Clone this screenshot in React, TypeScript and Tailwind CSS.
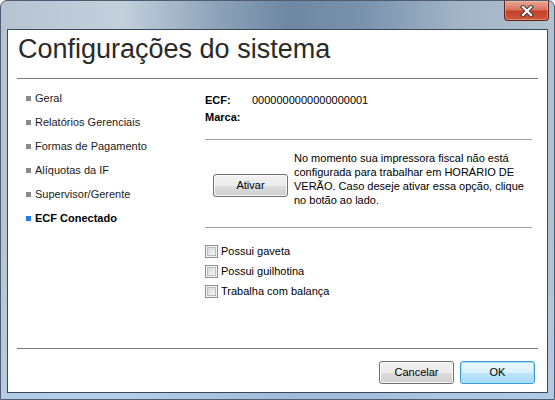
import React from 'react';

const navItems = [
  'Geral',
  'Relatórios Gerenciais',
  'Formas de Pagamento',
  'Alíquotas da IF',
  'Supervisor/Gerente',
];

function CheckRow({ label }: { label: string }) {
  return (
    <div className="flex h-[20px] items-center">
      <span className="flex h-[13px] w-[13px] items-center justify-center border border-[#8e8f8f] bg-[#f4f4f4]">
        <span className="h-[9px] w-[9px] border border-[#b9bcc0] bg-[linear-gradient(135deg,#d6d8da,#f6f6f6)]" />
      </span>
      <span className="ml-[3px]">{label}</span>
    </div>
  );
}

function WinButton({ label, primary = false }: { label: string; primary?: boolean }) {
  // Win7 look: grey gloss, default button gets the blue focus frame
  const look = primary
    ? 'border-[#3c9ad6] bg-[linear-gradient(to_bottom,#eaf6fd_0%,#d9f0fc_50%,#bee6fd_51%,#a7d9f5_100%)] shadow-[inset_0_0_0_1px_#a6e2fb]'
    : 'border-[#707070] bg-[linear-gradient(to_bottom,#f2f2f2_0%,#ebebeb_50%,#dddddd_51%,#cfcfcf_100%)] shadow-[inset_0_0_0_1px_#fbfbfb]';
  return (
    <button className={`flex h-[23px] w-[75px] items-center justify-center rounded-[3px] border text-[#000] ${look}`}>
      {label}
    </button>
  );
}

export default function App() {
  return (
    <div className="relative h-[400px] w-[555px] overflow-hidden rounded-t-[7px] border border-[#4e5e70] bg-[linear-gradient(to_bottom,transparent_0%,transparent_55%,rgba(178,206,235,0.75)_100%),linear-gradient(to_right,#b6c4d2_0%,#c3d0dc_22%,#8aa0b6_40%,#6e88a3_52%,#7a93ad_66%,#a1b3c5_82%,#b2c1d0_100%)] font-['Liberation_Sans',Arial,sans-serif] text-[11px] text-[#000]">
      {/* title bar */}
      <div className="flex h-[28px] justify-end pr-[5px]">
        <div className="flex h-[20px] w-[45px] items-center justify-center rounded-b-[4px] border border-t-0 border-[#5a241a] bg-[linear-gradient(to_bottom,#e9a898_0%,#d8745f_45%,#c4432a_55%,#d2563b_100%)] shadow-[inset_0_0_0_1px_rgba(255,200,180,0.45)]">
          <svg width="14" height="12" viewBox="0 0 14 12">
            <path d="M3 2 L11 10 M11 2 L3 10" stroke="#3a3a3a" strokeWidth="4.2" strokeLinecap="square" />
            <path d="M3 2 L11 10 M11 2 L3 10" stroke="#ffffff" strokeWidth="2.2" strokeLinecap="square" />
          </svg>
        </div>
      </div>

      {/* client area */}
      <div className="mx-[6px] flex h-[364px] flex-col border border-[#3a4959] bg-white">
        <div className="h-[48px] pl-[10px] pt-[4px] text-[27px] leading-[31px] text-[#2a2a2a]">
          Configurações do sistema
        </div>
        <div className="mx-[9px] h-px bg-[#7a7a7a]" />

        <div className="flex flex-1">
          <ul className="w-[197px] pl-[18px] pt-[7px]">
            {navItems.map((item) => (
              <li key={item} className="flex h-[24px] items-center text-[#1a1a1a]">
                <span className="mr-[4px] h-[5px] w-[5px] bg-[#8a8a8a]" />
                {item}
              </li>
            ))}
            <li className="flex h-[24px] items-center font-bold">
              <span className="mr-[4px] h-[5px] w-[5px] bg-[#1e7ee6]" />
              ECF Conectado
            </li>
          </ul>

          <div className="w-[327px] pt-[13px]">
            <div className="flex h-[17px] items-center">
              <span className="w-[47px] font-bold">ECF:</span>
              <span>0000000000000000001</span>
            </div>
            <div className="flex h-[17px] items-center font-bold">Marca:</div>
            <div className="mt-[13px] h-px bg-[#a0a0a0]" />

            <div className="mt-[11px] flex items-start">
              <div className="ml-[8px] mt-[23px]">
                <WinButton label="Ativar" />
              </div>
              <p className="ml-[6px] w-[230px] leading-[14px]">
                No momento sua impressora fiscal não está configurada para trabalhar em HORÁRIO DE VERÃO. Caso deseje
                ativar essa opção, clique no botão ao lado.
              </p>
            </div>
            <div className="mt-[20px] h-px bg-[#a0a0a0]" />

            <div className="mt-[13px]">
              <CheckRow label="Possui gaveta" />
              <CheckRow label="Possui guilhotina" />
              <CheckRow label="Trabalha com balança" />
            </div>
          </div>
        </div>

        <div className="mx-[9px] h-px bg-[#7a7a7a]" />
        <div className="flex justify-end gap-[6px] pb-[8px] pr-[12px] pt-[12px]">
          <WinButton label="Cancelar" />
          <WinButton label="OK" primary />
        </div>
      </div>
    </div>
  );
}
